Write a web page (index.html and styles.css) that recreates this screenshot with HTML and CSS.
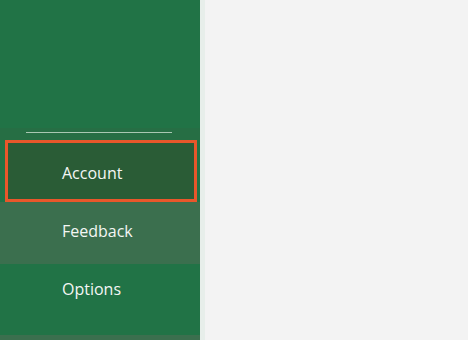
FILE: index.html
```html
<!DOCTYPE html>
<html lang="en">
<head>
  <meta charset="UTF-8">
  <title>Backstage</title>
  <link rel="stylesheet" href="styles.css">
</head>
<body>

  <!-- Backstage sidebar -->
  <div class="backstage">
    <div class="sidebar">
      <div class="sidebar-top"></div>
      <div class="divider-wrap">
        <div class="divider"></div>
      </div>
      <div class="nav-item selected"><span>Account</span></div>
      <div class="nav-item hover feedback"><span>Feedback</span></div>
      <div class="nav-item options"><span>Options</span></div>
      <div class="nav-item hover more"></div>
    </div>
    <div class="edge"></div>
    <div class="content"></div>
  </div>

</body>
</html>
```

FILE: styles.css
```css
/* Global Styles */
body {
  margin: 0;
  padding: 0;
  font-family: "Open Sans", "Noto Sans", sans-serif;
  overflow: hidden;
  background-color: #f3f3f3;
}

.backstage {
  display: flex;
  height: 340px;
}

/* Sidebar */
.sidebar {
  width: 200px;
  background-color: #217346;
  display: flex;
  flex-direction: column;
  overflow: hidden;
}

.sidebar > div {
  flex-shrink: 0;
}

.sidebar-top {
  height: 128px;
}

.divider-wrap {
  background-color: #266e44;
  padding-top: 4px;
  padding-bottom: 7px;
}

.divider {
  height: 1px;
  margin: 0 28px 0 26px;
  background-color: #a9c7b2;
}

.nav-item {
  height: 62px;
  display: flex;
  align-items: center;
  padding-left: 62px;
  color: #f4f6f4;
  font-size: 16px;
  background-color: #217346;
  box-sizing: border-box;
}

.nav-item.hover {
  background-color: #3b6f4e;
}

.nav-item.feedback {
  padding-bottom: 4px;
}

.nav-item.options {
  padding-bottom: 12px;
}

.nav-item.more {
  margin-top: 9px;
}

.nav-item.selected {
  margin: 0 3px 0 5px;
  padding-left: 54px;
  padding-top: 4px;
  background-color: #2a5c36;
  border: 3px solid #e8572b;
}

/* Content */
.edge {
  width: 5px;
  background-color: #e7eeea;
}

.content {
  flex: 1;
  background-color: #f3f3f3;
}
```
